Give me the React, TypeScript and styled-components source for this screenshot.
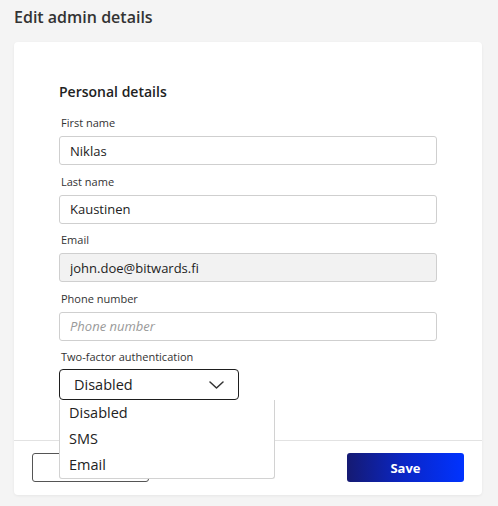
import * as React from 'react';
import styled, { createGlobalStyle } from 'styled-components';

const Global = createGlobalStyle`
  html, body {
    margin: 0;
    background: #f4f4f4;
    font-family: "Open Sans", "Noto Sans", sans-serif;
    color: #222;
  }
`;

const fields = [
  { label: 'First name', value: 'Niklas' },
  { label: 'Last name', value: 'Kaustinen' },
  { label: 'Email', value: 'john.doe@bitwards.fi', readOnly: true },
  { label: 'Phone number', placeholder: 'Phone number' },
];

const options = ['Disabled', 'SMS', 'Email'];

const Chevron = () => (
  <svg width="15" height="8" viewBox="0 0 15 8" fill="none">
    <polyline points="1,1 7.5,7 14,1" stroke="#333" strokeWidth="1.5" strokeLinecap="round" strokeLinejoin="round" />
  </svg>
);

export default function App() {
  const [open] = React.useState(true);

  return (
    <>
      <Global />
      <Page>
        <Title>Edit admin details</Title>
        <Card>
          <Body>
            <SectionTitle>Personal details</SectionTitle>
            {fields.map(f => (
              <Field key={f.label}>
                <Label>{f.label}</Label>
                <Input
                  defaultValue={f.value}
                  placeholder={f.placeholder}
                  readOnly={f.readOnly}
                  $disabled={f.readOnly}
                />
              </Field>
            ))}
            <Field>
              <Label>Two-factor authentication</Label>
              <SelectWrap>
                <SelectBox>
                  <span>Disabled</span>
                  <Chevron />
                </SelectBox>
                {open && (
                  <Menu>
                    {options.map(o => (
                      <MenuItem key={o}>{o}</MenuItem>
                    ))}
                  </Menu>
                )}
              </SelectWrap>
            </Field>
          </Body>
          <Footer>
            <Button>Cancel</Button>
            <Button $primary>Save</Button>
          </Footer>
        </Card>
      </Page>
    </>
  );
}

const Page = styled.div`
  padding: 6px 16px 11px 14px;
`;

const Title = styled.h1`
  margin: 0 0 14px;
  font-size: 16px;
  line-height: 22px;
  font-weight: 600;
  color: #333;
`;

const Card = styled.div`
  background: #fff;
  border-radius: 4px;
  box-shadow: 0 1px 3px rgba(0, 0, 0, 0.06);
`;

const Body = styled.div`
  padding: 40px 45px 40px;
`;

const SectionTitle = styled.h2`
  margin: 0 0 13px;
  font-size: 14px;
  line-height: 20px;
  font-weight: 600;
  color: #222;
`;

const Field = styled.div`
  display: flex;
  flex-direction: column;
  margin-bottom: 8.5px;

  &:last-child {
    margin-bottom: 0;
  }
`;

const Label = styled.label`
  padding-left: 2px;
  font-size: 11px;
  line-height: 15px;
  color: #333;
  margin-bottom: 6px;
`;

const Input = styled.input<{ $disabled?: boolean }>`
  box-sizing: border-box;
  height: 29px;
  width: 100%;
  padding: 0 10px;
  border: 1px solid #cfcfcf;
  border-radius: 3px;
  background: ${p => (p.$disabled ? '#f2f2f2' : '#fff')};
  font-family: inherit;
  font-size: 13px;
  color: #222;
  outline: none;

  &::placeholder {
    font-style: italic;
    color: #9a9a9a;
  }
`;

const SelectWrap = styled.div`
  position: relative;
  width: 180px;
  margin-top: -1px;
`;

const SelectBox = styled.div`
  box-sizing: border-box;
  height: 31px;
  display: flex;
  align-items: center;
  justify-content: space-between;
  padding: 0 14px 0 14px;
  border: 1px solid #1e1e1e;
  border-radius: 4px;
  font-size: 14.5px;
  color: #222;
`;

const Menu = styled.div`
  position: absolute;
  top: 100%;
  left: 0;
  width: 216px;
  box-sizing: border-box;
  background: #fff;
  border: 1px solid #d2d2d2;
  border-top: none;
  border-radius: 0 0 3px 3px;
  z-index: 2;
`;

const MenuItem = styled.div`
  padding: 0 9px;
  font-size: 14.5px;
  line-height: 26px;
  color: #222;
`;

const Footer = styled.div`
  display: flex;
  justify-content: space-between;
  padding: 12px 18px 13px;
  border-top: 1px solid #e2e2e2;
`;

const Button = styled.button<{ $primary?: boolean }>`
  width: 117px;
  height: 29px;
  border-radius: 3px;
  font-family: inherit;
  font-size: 13px;
  font-weight: 700;
  cursor: pointer;
  border: ${p => (p.$primary ? 'none' : '1px solid #555')};
  background: ${p => (p.$primary ? 'linear-gradient(90deg, #151a72 0%, #0a26c8 50%, #0033ff 100%)' : '#fff')};
  color: ${p => (p.$primary ? '#fff' : '#222')};
`;
